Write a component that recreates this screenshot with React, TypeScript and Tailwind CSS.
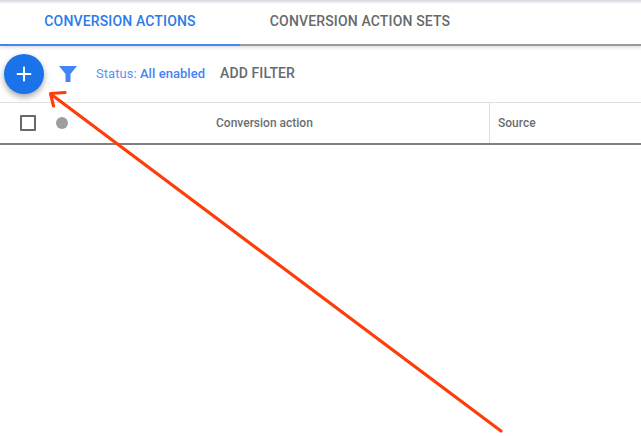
import { Plus } from "lucide-react";

const roboto = "font-['Roboto',sans-serif]";

export default function App() {
  return (
    <div className={`relative h-[436px] w-[641px] overflow-hidden bg-white ${roboto}`}>
      <div className="absolute inset-x-0 top-0 h-[4px] bg-gradient-to-b from-gray-300 to-white" />

      <div className="flex h-[46px] border-b-2 border-[#9a9a9a] shadow-[0_2px_3px_rgba(0,0,0,0.12)]">
        <div className="-mb-[2px] flex w-[240px] items-center justify-center border-b-2 border-[#4285f4] pb-[2px] text-[14px] font-medium tracking-[0.15px] text-[#2a7bea]">
          CONVERSION ACTIONS
        </div>
        <div className="flex w-[240px] items-center justify-center pb-[2px] text-[14px] font-medium tracking-[0.15px] text-[#666a6e]">
          CONVERSION ACTION SETS
        </div>
      </div>

      <div className="flex h-[57px] items-center border-b border-[#e0e0e0] pb-[1px] pl-[4px]">
        <button className="z-10 flex size-10 items-center justify-center rounded-full bg-[#1a73e8] text-white shadow-[0_3px_6px_rgba(0,0,0,0.35)]">
          <Plus size={22} strokeWidth={2.2} />
        </button>
        <svg viewBox="0 0 18 18" className="ml-[15px] size-[18px] text-[#4285f4]" fill="currentColor">
          <path d="M0 1h18l-6.5 8v8h-5V9z" />
        </svg>
        <div className="ml-[19px] text-[13px] tracking-[0.05px] text-[#5c93f0]">
          Status: <span className="font-medium text-[#4285f4]">All enabled</span>
        </div>
        <div className="ml-[15px] text-[14px] font-medium tracking-[0.1px] text-[#666a6e]">ADD FILTER</div>
      </div>

      <div className="flex h-[42px] border-b-2 border-[#808080] text-[12px] font-medium text-[#6b6f73]">
        <div className="flex w-[489px] items-center">
          <div className="ml-[20px] size-4 rounded-[1px] border-2 border-[#666a6e]" />
          <div className="ml-[20px] size-3 rounded-full bg-[#9e9e9e]" />
          <div className="ml-[148px]">Conversion action</div>
        </div>
        <div className="flex flex-1 items-center border-l border-[#e0e0e0] pl-[8px]">Source</div>
      </div>

      <svg className="pointer-events-none absolute inset-0 z-20" width="641" height="436" viewBox="0 0 641 436" fill="none">
        <path d="M501 431L52 95" stroke="#ff3d0a" strokeWidth="3.2" strokeLinecap="round" />
        <path d="M53.5 106L50.5 93.5L65 92.5" stroke="#ff3d0a" strokeWidth="3.2" strokeLinecap="round" strokeLinejoin="round" />
      </svg>
    </div>
  );
}
